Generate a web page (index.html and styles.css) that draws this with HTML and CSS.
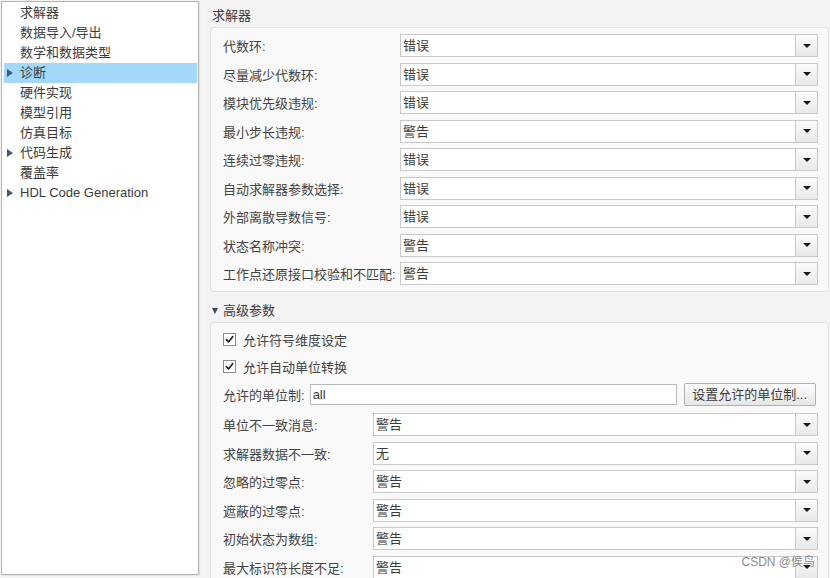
FILE: index.html
```html
<!DOCTYPE html>
<html lang="zh">
<head>
<meta charset="utf-8">
<title>配置参数 - 诊断</title>
<link rel="stylesheet" href="styles.css">
</head>
<body>
<div class="app">
  <aside class="tree">
    <div class="node"><span class="slot"></span>求解器</div>
    <div class="node"><span class="slot"></span>数据导入/导出</div>
    <div class="node"><span class="slot"></span>数学和数据类型</div>
    <div class="node selected"><span class="slot"><span class="tri"></span></span>诊断</div>
    <div class="node"><span class="slot"></span>硬件实现</div>
    <div class="node"><span class="slot"></span>模型引用</div>
    <div class="node"><span class="slot"></span>仿真目标</div>
    <div class="node"><span class="slot"><span class="tri"></span></span>代码生成</div>
    <div class="node"><span class="slot"></span>覆盖率</div>
    <div class="node"><span class="slot"><span class="tri"></span></span>HDL Code Generation</div>
  </aside>

  <main class="pane">
    <div class="section-title">求解器</div>
    <div class="group group-solver">
      <div class="row"><span class="label">代数环:</span><div class="select"><span class="value">错误</span><span class="drop"><span class="down"></span></span></div></div>
      <div class="row"><span class="label">尽量减少代数环:</span><div class="select"><span class="value">错误</span><span class="drop"><span class="down"></span></span></div></div>
      <div class="row"><span class="label">模块优先级违规:</span><div class="select"><span class="value">错误</span><span class="drop"><span class="down"></span></span></div></div>
      <div class="row"><span class="label">最小步长违规:</span><div class="select"><span class="value">警告</span><span class="drop"><span class="down"></span></span></div></div>
      <div class="row"><span class="label">连续过零违规:</span><div class="select"><span class="value">错误</span><span class="drop"><span class="down"></span></span></div></div>
      <div class="row"><span class="label">自动求解器参数选择:</span><div class="select"><span class="value">错误</span><span class="drop"><span class="down"></span></span></div></div>
      <div class="row"><span class="label">外部离散导数信号:</span><div class="select"><span class="value">错误</span><span class="drop"><span class="down"></span></span></div></div>
      <div class="row"><span class="label">状态名称冲突:</span><div class="select"><span class="value">警告</span><span class="drop"><span class="down"></span></span></div></div>
      <div class="row"><span class="label">工作点还原接口校验和不匹配:</span><div class="select"><span class="value">警告</span><span class="drop"><span class="down"></span></span></div></div>
    </div>

    <div class="section-title adv"><span class="caret"></span>高级参数</div>
    <div class="group group-adv">
      <div class="check-row r1"><span class="checkbox"><svg viewBox="0 0 13 13" width="13" height="13"><path d="M2.8 6.6 L5.3 9.4 L10.2 3.2" fill="none" stroke="#1e1e1e" stroke-width="2" stroke-linecap="round" stroke-linejoin="round"/></svg></span>允许符号维度设定</div>
      <div class="check-row r2"><span class="checkbox"><svg viewBox="0 0 13 13" width="13" height="13"><path d="M2.8 6.6 L5.3 9.4 L10.2 3.2" fill="none" stroke="#1e1e1e" stroke-width="2" stroke-linecap="round" stroke-linejoin="round"/></svg></span>允许自动单位转换</div>
      <div class="unit-row">
        <span class="unit-label">允许的单位制:</span>
        <div class="text-input">all</div>
        <div class="button">设置允许的单位制...</div>
      </div>
      <div class="row first"><span class="label">单位不一致消息:</span><div class="select"><span class="value">警告</span><span class="drop"><span class="down"></span></span></div></div>
      <div class="row"><span class="label">求解器数据不一致:</span><div class="select"><span class="value">无</span><span class="drop"><span class="down"></span></span></div></div>
      <div class="row"><span class="label">忽略的过零点:</span><div class="select"><span class="value">警告</span><span class="drop"><span class="down"></span></span></div></div>
      <div class="row"><span class="label">遮蔽的过零点:</span><div class="select"><span class="value">警告</span><span class="drop"><span class="down"></span></span></div></div>
      <div class="row"><span class="label">初始状态为数组:</span><div class="select"><span class="value">警告</span><span class="drop"><span class="down"></span></span></div></div>
      <div class="row"><span class="label">最大标识符长度不足:</span><div class="select"><span class="value">警告</span><span class="drop"><span class="down"></span></span></div></div>
    </div>
  </main>

  <div class="watermark">CSDN @侯鸟</div>
</div>
</body>
</html>
```

FILE: styles.css
```css
* { box-sizing: border-box; }

html, body {
  margin: 0;
  padding: 0;
}

body {
  background: #f3f3f3;
  font-family: "Liberation Sans", "Noto Sans CJK SC", sans-serif;
  font-size: 13px;
  color: #3c3c3c;
}

.app {
  position: relative;
  display: flex;
  width: 830px;
  height: 578px;
  overflow: hidden;
}

/* ---------- left tree ---------- */
.tree {
  flex: 0 0 198px;
  margin: 1px 0 0 1px;
  height: 574px;
  background: #ffffff;
  border: 1px solid #b5b5b5;
  box-shadow: 1px 1px 1px rgba(0,0,0,0.06);
  padding: 1px 1px 0 2px;
}

.node {
  display: flex;
  align-items: center;
  height: 20px;
  line-height: 20px;
  color: #3c3c3c;
  white-space: nowrap;
}

.node.selected {
  background: #a3d8fa;
}

.slot {
  flex: 0 0 16px;
  display: flex;
  align-items: center;
  height: 20px;
}

.tri {
  margin-left: 3px;
  width: 0;
  height: 0;
  border-left: 6px solid #3d5a78;
  border-top: 4px solid transparent;
  border-bottom: 4px solid transparent;
}

/* ---------- right pane ---------- */
.pane {
  flex: 1 1 auto;
  padding: 5px 1px 0 11px;
  min-width: 0;
}

.section-title {
  height: 21px;
  line-height: 21px;
  padding-left: 2px;
  margin-bottom: 1px;
  color: #3c3c3c;
}

.section-title.adv {
  display: flex;
  align-items: center;
  margin-top: 9px;
  height: 20px;
  line-height: 20px;
}

.caret {
  width: 0;
  height: 0;
  margin: 0 5px 0 0;
  border-top: 6px solid #3d4a58;
  border-left: 3.5px solid transparent;
  border-right: 3.5px solid transparent;
}

.group {
  background: #f9f9f9;
  border: 1px solid #e1e1e1;
  border-radius: 4px;
  padding: 6px 10px 6px 12px;
  display: flex;
  flex-direction: column;
  gap: 5.5px;
}

.row {
  display: flex;
  align-items: center;
  height: 23px;
}

.label {
  white-space: nowrap;
  color: #444;
}

.group-solver .label { flex: 0 0 177px; }
.group-adv .label { flex: 0 0 150px; }

.select {
  flex: 1 1 auto;
  display: flex;
  height: 23px;
  background: #fff;
  border: 1px solid #c9c9c9;
}

.value {
  flex: 1 1 auto;
  padding-left: 2px;
  line-height: 21px;
  color: #3c3c3c;
}

.drop {
  flex: 0 0 22px;
  display: flex;
  align-items: center;
  justify-content: center;
  border-left: 1px solid #c9c9c9;
  background: linear-gradient(#fbfbfb, #e9e9e9);
}

.down {
  width: 0;
  height: 0;
  border-top: 4px solid #1a1a1a;
  border-left: 4px solid transparent;
  border-right: 4px solid transparent;
}

/* advanced group */
.group-adv {
  padding-top: 5px;
  gap: 0;
  height: 300px;
  border-bottom: none;
}

.check-row {
  display: flex;
  align-items: center;
  height: 23px;
  color: #444;
}

.check-row.r2 { margin-top: 4px; }

.checkbox {
  flex: 0 0 13px;
  width: 13px;
  height: 13px;
  margin-right: 7px;
  background: #fff;
  border: 1px solid #8c8c8c;
  display: flex;
  align-items: center;
  justify-content: center;
}

.checkbox svg { display: block; }

.unit-row {
  display: flex;
  align-items: center;
  height: 23px;
  margin-top: 5px;
}

.unit-label {
  white-space: nowrap;
  color: #444;
  margin-right: 5px;
}

.text-input {
  flex: 0 0 367px;
  height: 21px;
  line-height: 19px;
  background: #fff;
  border: 1px solid #b9b9b9;
  padding-left: 2px;
  color: #3c3c3c;
}

.button {
  margin-left: 7px;
  flex: 0 0 132px;
  height: 23px;
  line-height: 21px;
  text-align: center;
  border: 1px solid #b0b0b0;
  border-radius: 2px;
  background: linear-gradient(#fcfcfc, #e6e6e6);
  color: #3c3c3c;
  white-space: nowrap;
}

.group-adv .row.first { margin-top: 7px; }
.group-adv .row + .row { margin-top: 5.5px; }

/* watermark overlay */
.watermark {
  position: absolute;
  right: 15px;
  top: 554px;
  font-size: 12px;
  line-height: 16px;
  color: #8a8a8a;
  white-space: nowrap;
}
```
